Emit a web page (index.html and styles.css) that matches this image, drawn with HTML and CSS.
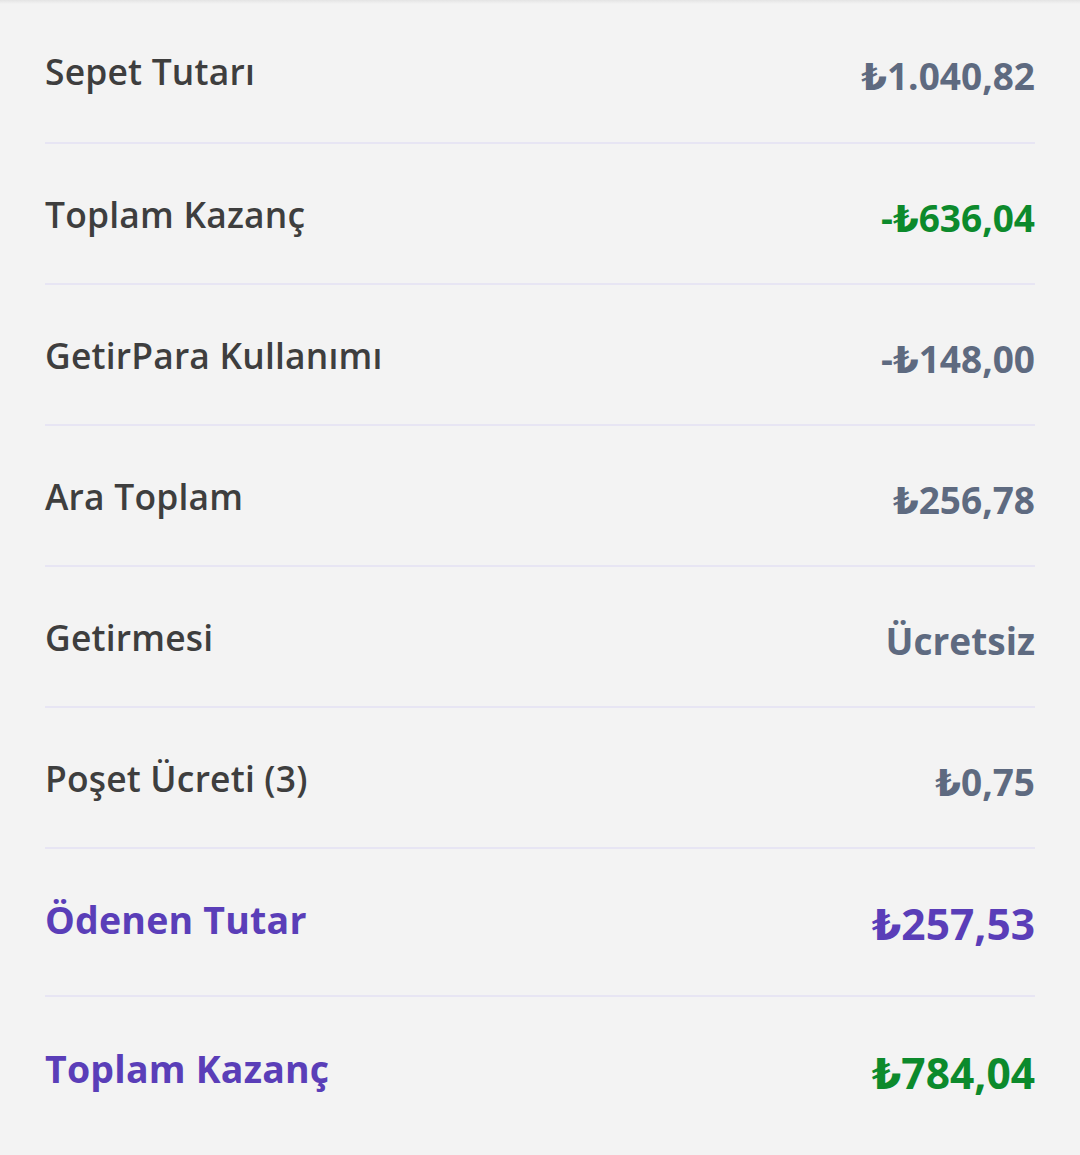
FILE: index.html
```html
<!DOCTYPE html>
<html lang="tr">
<head>
<meta charset="utf-8">
<title>Sipariş Özeti</title>
<link rel="stylesheet" href="styles.css">
</head>
<body>
<div class="top-edge"></div>
<section class="summary">
  <div class="row">
    <span class="label">Sepet Tutarı</span>
    <span class="value">₺1.040,82</span>
  </div>
  <div class="row">
    <span class="label">Toplam Kazanç</span>
    <span class="value green">-₺636,04</span>
  </div>
  <div class="row">
    <span class="label">GetirPara Kullanımı</span>
    <span class="value">-₺148,00</span>
  </div>
  <div class="row">
    <span class="label">Ara Toplam</span>
    <span class="value">₺256,78</span>
  </div>
  <div class="row">
    <span class="label">Getirmesi</span>
    <span class="value">Ücretsiz</span>
  </div>
  <div class="row">
    <span class="label">Poşet Ücreti (3)</span>
    <span class="value">₺0,75</span>
  </div>
  <div class="row big">
    <span class="label">Ödenen Tutar</span>
    <span class="value purple">₺257,53</span>
  </div>
  <div class="row big last">
    <span class="label">Toplam Kazanç</span>
    <span class="value green">₺784,04</span>
  </div>
</section>
</body>
</html>
```

FILE: styles.css
```css
html, body {
  margin: 0;
  padding: 0;
}
body {
  background: #f3f3f3;
  font-family: "Open Sans", "DejaVu Sans", sans-serif;
  width: 1080px;
  height: 1155px;
  overflow: hidden;
}
.top-edge {
  height: 4px;
  background: linear-gradient(#e4e4e4, #f3f3f3);
}
.summary {
  display: flex;
  flex-direction: column;
  padding: 0 45px;
  margin-top: -4px;
}
.row {
  display: flex;
  justify-content: space-between;
  align-items: center;
  height: 141px;
  border-bottom: 2px solid #e7e5f3;
  box-sizing: border-box;
}
.row:first-child {
  height: 144px;
}
.row.big {
  height: 148px;
  padding-bottom: 6px;
}
.row.last {
  border-bottom: none;
}
.label {
  font-size: 35.4px;
  font-weight: 600;
  color: #3e3e3e;
  letter-spacing: 0.2px;
}
.value {
  font-size: 37px;
  font-weight: 700;
  color: #5e6a80;
  padding-top: 8px;
}
.green {
  color: #0c8a2c;
}
.purple {
  color: #5a3eb8;
}
.big .label {
  font-size: 37.5px;
  font-weight: 700;
  color: #5a3eb8;
}
.big .value {
  font-size: 42.5px;
}
```
